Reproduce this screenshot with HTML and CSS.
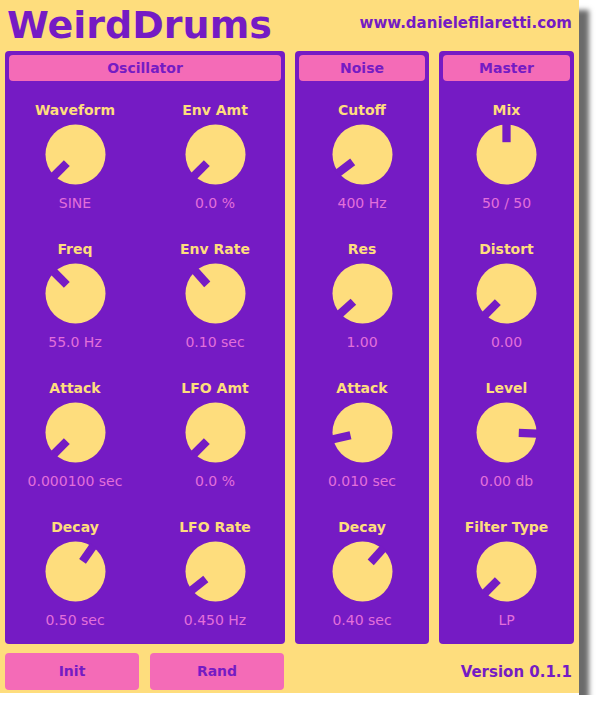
FILE: index.html
```html
<!DOCTYPE html>
<html>
<head>
<meta charset="utf-8">
<title>WeirdDrums</title>
<link rel="stylesheet" href="styles.css">
</head>
<body>
<div class="app">
  <header class="header">
    <div class="title">WeirdDrums</div>
    <div class="url">www.danielefilaretti.com</div>
  </header>
  <main class="panels">
    <section class="panel">
      <div class="panel-title">Oscillator</div>
      <div class="controls two">
        <div class="control"><div class="label">Waveform</div><svg class="knob" viewBox="-31 -31 62 62"><circle class="knob-body" r="30.5"/><rect class="knob-notch" x="-4.2" y="-32" width="8.4" height="19.5" transform="rotate(-135)"/></svg><div class="value">SINE</div></div>
        <div class="control"><div class="label">Env Amt</div><svg class="knob" viewBox="-31 -31 62 62"><circle class="knob-body" r="30.5"/><rect class="knob-notch" x="-4.2" y="-32" width="8.4" height="19.5" transform="rotate(-135)"/></svg><div class="value">0.0 %</div></div>
        <div class="control"><div class="label">Freq</div><svg class="knob" viewBox="-31 -31 62 62"><circle class="knob-body" r="30.5"/><rect class="knob-notch" x="-4.2" y="-32" width="8.4" height="19.5" transform="rotate(-45)"/></svg><div class="value">55.0 Hz</div></div>
        <div class="control"><div class="label">Env Rate</div><svg class="knob" viewBox="-31 -31 62 62"><circle class="knob-body" r="30.5"/><rect class="knob-notch" x="-4.2" y="-32" width="8.4" height="19.5" transform="rotate(-42)"/></svg><div class="value">0.10 sec</div></div>
        <div class="control"><div class="label">Attack</div><svg class="knob" viewBox="-31 -31 62 62"><circle class="knob-body" r="30.5"/><rect class="knob-notch" x="-4.2" y="-32" width="8.4" height="19.5" transform="rotate(-135)"/></svg><div class="value">0.000100 sec</div></div>
        <div class="control"><div class="label">LFO Amt</div><svg class="knob" viewBox="-31 -31 62 62"><circle class="knob-body" r="30.5"/><rect class="knob-notch" x="-4.2" y="-32" width="8.4" height="19.5" transform="rotate(-135)"/></svg><div class="value">0.0 %</div></div>
        <div class="control"><div class="label">Decay</div><svg class="knob" viewBox="-31 -31 62 62"><circle class="knob-body" r="30.5"/><rect class="knob-notch" x="-4.2" y="-32" width="8.4" height="19.5" transform="rotate(35)"/></svg><div class="value">0.50 sec</div></div>
        <div class="control"><div class="label">LFO Rate</div><svg class="knob" viewBox="-31 -31 62 62"><circle class="knob-body" r="30.5"/><rect class="knob-notch" x="-4.2" y="-32" width="8.4" height="19.5" transform="rotate(-128)"/></svg><div class="value">0.450 Hz</div></div>
      </div>
    </section>
    <section class="panel">
      <div class="panel-title">Noise</div>
      <div class="controls">
        <div class="control"><div class="label">Cutoff</div><svg class="knob" viewBox="-31 -31 62 62"><circle class="knob-body" r="30.5"/><rect class="knob-notch" x="-4.2" y="-32" width="8.4" height="19.5" transform="rotate(-127)"/></svg><div class="value">400 Hz</div></div>
        <div class="control"><div class="label">Res</div><svg class="knob" viewBox="-31 -31 62 62"><circle class="knob-body" r="30.5"/><rect class="knob-notch" x="-4.2" y="-32" width="8.4" height="19.5" transform="rotate(-132)"/></svg><div class="value">1.00</div></div>
        <div class="control"><div class="label">Attack</div><svg class="knob" viewBox="-31 -31 62 62"><circle class="knob-body" r="30.5"/><rect class="knob-notch" x="-4.2" y="-32" width="8.4" height="19.5" transform="rotate(-103)"/></svg><div class="value">0.010 sec</div></div>
        <div class="control"><div class="label">Decay</div><svg class="knob" viewBox="-31 -31 62 62"><circle class="knob-body" r="30.5"/><rect class="knob-notch" x="-4.2" y="-32" width="8.4" height="19.5" transform="rotate(42)"/></svg><div class="value">0.40 sec</div></div>
      </div>
    </section>
    <section class="panel">
      <div class="panel-title">Master</div>
      <div class="controls">
        <div class="control"><div class="label">Mix</div><svg class="knob" viewBox="-31 -31 62 62"><circle class="knob-body" r="30.5"/><rect class="knob-notch" x="-4.2" y="-32" width="8.4" height="19.5" transform="rotate(0)"/></svg><div class="value">50 / 50</div></div>
        <div class="control"><div class="label">Distort</div><svg class="knob" viewBox="-31 -31 62 62"><circle class="knob-body" r="30.5"/><rect class="knob-notch" x="-4.2" y="-32" width="8.4" height="19.5" transform="rotate(-135)"/></svg><div class="value">0.00</div></div>
        <div class="control"><div class="label">Level</div><svg class="knob" viewBox="-31 -31 62 62"><circle class="knob-body" r="30.5"/><rect class="knob-notch" x="-4.2" y="-32" width="8.4" height="19.5" transform="rotate(92)"/></svg><div class="value">0.00 db</div></div>
        <div class="control"><div class="label">Filter Type</div><svg class="knob" viewBox="-31 -31 62 62"><circle class="knob-body" r="30.5"/><rect class="knob-notch" x="-4.2" y="-32" width="8.4" height="19.5" transform="rotate(-135)"/></svg><div class="value">LP</div></div>
      </div>
    </section>
  </main>
  <footer class="footer">
    <button class="btn">Init</button>
    <button class="btn">Rand</button>
    <div class="version">Version 0.1.1</div>
  </footer>
</div>
</body>
</html>
```
FILE: styles.css
```css
:root {
  --yellow: #fedd7d;
  --purple: #751bc4;
  --pink: #f46bb7;
  --value: #e36fda;
}
html, body {
  margin: 0;
  padding: 0;
  background: #ffffff;
}
body {
  font-family: "DejaVu Sans", Verdana, sans-serif;
}
.app {
  width: 579px;
  height: 693px;
  background: var(--yellow);
  border-bottom: 2px solid #ffffff;
  box-shadow: 10px 10px 5px rgba(0, 0, 0, 0.58);
  display: flex;
  flex-direction: column;
}
.header {
  height: 51px;
  display: flex;
  justify-content: space-between;
  align-items: flex-start;
  padding: 0 7px 0 7px;
  box-sizing: border-box;
  color: var(--purple);
  font-weight: bold;
}
.title {
  font-size: 38px;
  line-height: 38px;
  margin-top: 6px;
}
.url {
  font-size: 15px;
  line-height: 17px;
  margin-top: 15px;
}
.panels {
  display: grid;
  grid-template-columns: 280px 134px 135px;
  column-gap: 10px;
  padding: 0 5px;
  height: 593px;
}
.panel {
  background: var(--purple);
  border-radius: 4px;
  padding: 4px;
  box-sizing: border-box;
}
.panel-title {
  background: var(--pink);
  border-radius: 4px;
  height: 26px;
  line-height: 26px;
  text-align: center;
  font-weight: bold;
  font-size: 14px;
  color: var(--purple);
}
.controls {
  display: grid;
  grid-template-columns: 1fr;
  row-gap: 26px;
  padding-top: 19px;
  margin: 0 -4px;
}
.controls.two {
  grid-template-columns: 1fr 1fr;
}
.control {
  display: flex;
  flex-direction: column;
  align-items: center;
}
.label {
  font-size: 14px;
  font-weight: bold;
  line-height: 20px;
  height: 20px;
  color: var(--yellow);
  white-space: nowrap;
}
.knob {
  display: block;
  width: 61px;
  height: 61px;
  margin-top: 4px;
}
.knob-body {
  fill: var(--yellow);
}
.knob-notch {
  fill: var(--purple);
}
.value {
  font-size: 14px;
  line-height: 20px;
  height: 20px;
  margin-top: 8px;
  color: var(--value);
  white-space: nowrap;
}
.footer {
  display: flex;
  align-items: flex-start;
  padding: 9px 5px 0 5px;
  height: 49px;
  box-sizing: border-box;
}
.btn {
  width: 134px;
  height: 37px;
  margin: 0 11px 0 0;
  padding: 0;
  border: none;
  border-radius: 4px;
  background: var(--pink);
  color: var(--purple);
  font-family: "DejaVu Sans", Verdana, sans-serif;
  font-weight: bold;
  font-size: 14px;
  line-height: 37px;
  text-align: center;
}
.version {
  margin-left: auto;
  margin-right: 2px;
  margin-top: 10px;
  font-size: 15px;
  line-height: 18px;
  font-weight: bold;
  color: var(--purple);
}
```
